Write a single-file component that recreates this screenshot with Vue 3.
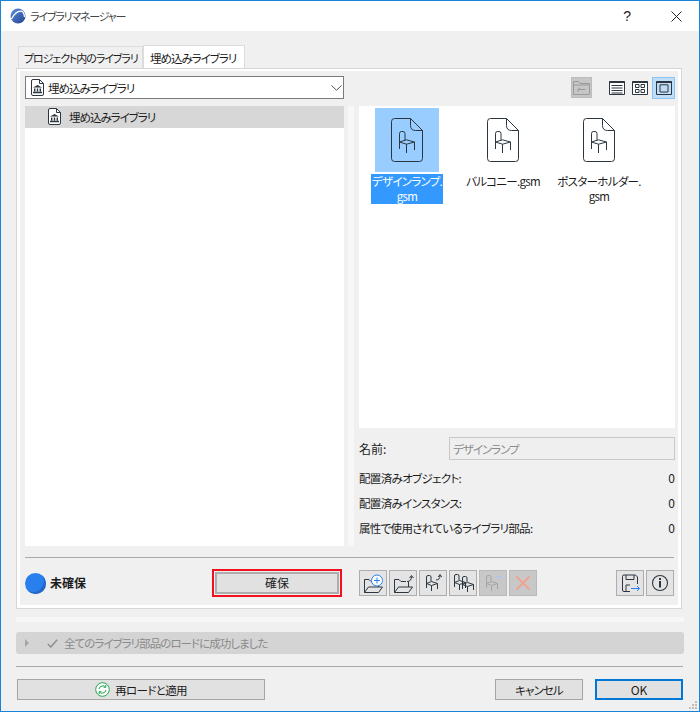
<script setup>
const files = [
  { top: 'デザインランプ.', bottom: 'gsm', selected: true },
  { top: 'バルコニー.gsm', bottom: '', selected: false },
  { top: 'ポスターホルダー.', bottom: 'gsm', selected: false },
]
const stats = [
  { label: '配置済みオブジェクト:', value: 0 },
  { label: '配置済みインスタンス:', value: 0 },
  { label: '属性で使用されているライブラリ部品:', value: 0 },
]
</script>

<template>
  <div class="window">
    <svg class="defs" width="0" height="0">
      <defs>
        <symbol id="chair" viewBox="0 0 16 22">
          <path d="M.5 18V2.5Q.5.5 2.5.5H4Q6 .5 6 2.5V9.5M.5 11L7.5 8.8 15.5 11 7.5 13.2ZM7.5 13.2V22M15.5 11V19" fill="none" stroke="currentColor" stroke-width="1" vector-effect="non-scaling-stroke" />
        </symbol>
        <symbol id="chair-s" viewBox="0 0 12 16">
          <path d="M.5 13V2Q.5.5 2 .5H3.5Q5 .5 5 2V6M.5 8.5L5.5 6.5 11.5 8.5 5.5 10.5ZM5.5 10.5V16M11.5 8.5V14" fill="none" stroke="currentColor" stroke-width="1" />
        </symbol>
        <symbol id="bank" viewBox="0 0 13 17">
          <path d="M.5 2Q.5.5 2 .5H8.5L12.5 4.5V15Q12.5 16.5 11 16.5H2Q.5 16.5.5 15Z" fill="#fff" stroke="#2b3640" stroke-width="1" />
          <path d="M8.5.5V4.5H12.5" fill="none" stroke="#2b3640" stroke-width="1" />
          <path d="M6.5 6L11 8.6H2ZM3 9.4H4.4V12.4H3ZM5.8 9.4H7.2V12.4H5.8ZM8.6 9.4H10V12.4H8.6ZM2 12.8H11V14.2H2Z" fill="#2b3640" />
        </symbol>
        <symbol id="folder" viewBox="0 0 28 26">
          <path d="M5.5 22.5V9.5H10L12 11.5H17M5.5 22.5H19.5L23.5 17H9.5ZM19.5 11.5V17" fill="none" stroke="currentColor" stroke-width="1" />
        </symbol>
      </defs>
    </svg>

    <header class="titlebar">
      <svg class="logo" width="16" height="16" viewBox="0 0 16 16">
        <defs>
          <linearGradient id="logoFill" x1="0" y1="0" x2="1" y2="1">
            <stop offset="0" stop-color="#5b93e0" />
            <stop offset="1" stop-color="#23418c" />
          </linearGradient>
        </defs>
        <circle cx="8" cy="8" r="7.5" fill="url(#logoFill)" />
        <path d="M1.5 11Q6 2.5 11.5 3.2Q14 4 14.5 9" fill="none" stroke="#fff" stroke-width="1.3" />
      </svg>
      <span class="title-text">ライブラリマネージャー</span>
      <span class="help">?</span>
      <svg class="close" width="11" height="11" viewBox="0 0 11 11">
        <path d="M.5.5L10.5 10.5M10.5.5L.5 10.5" stroke="#222" stroke-width="1" fill="none" />
      </svg>
    </header>

    <div class="tabs">
      <div class="tab">プロジェクト内のライブラリ</div>
      <div class="tab active">埋め込みライブラリ</div>
    </div>

    <section class="panel">
      <div class="panel-inner">
        <div class="panes">
          <div class="left">
            <div class="select">
              <svg class="lib" width="13" height="17"><use href="#bank" /></svg>
              <span class="select-text">埋め込みライブラリ</span>
              <svg class="chev" width="11" height="6" viewBox="0 0 11 6">
                <path d="M.5.5L5.5 5.2 10.5.5" fill="none" stroke="#555" stroke-width="1" />
              </svg>
            </div>
            <div class="tree">
              <div class="tree-row">
                <svg class="lib" width="13" height="17"><use href="#bank" /></svg>
                <span>埋め込みライブラリ</span>
              </div>
            </div>
          </div>

          <div class="splitter"></div>

          <div class="right">
            <div class="view-bar">
              <div class="up-btn">
                <svg width="17" height="15" viewBox="0 0 17 15">
                  <path d="M.5 14.5V1.5H5.5L7 3.5H16.5V14.5ZM.5 5H16.5M5 9.5H12.5M5 9.5L7 7.8M5 9.5V12" fill="none" stroke="#9a9a9a" stroke-width="1" />
                </svg>
              </div>
              <svg class="view-icon first" width="16" height="14" viewBox="0 0 16 14">
                <path d="M.5.5H15.5V13.5H.5Z" fill="#fff" stroke="#2b3640" />
                <path d="M.5 1H15.5" stroke="#2b3640" stroke-width="2" />
                <path d="M2.5 4.5H13.5M2.5 7H13.5M2.5 9.5H13.5M2.5 12H13.5" stroke="#2b3640" />
              </svg>
              <svg class="view-icon" width="16" height="14" viewBox="0 0 16 14">
                <path d="M.5.5H15.5V13.5H.5Z" fill="#fff" stroke="#2b3640" />
                <path d="M.5 1H15.5" stroke="#2b3640" stroke-width="2" />
                <path d="M3.5 3.5H7V6.5H3.5ZM9 3.5H12.5V6.5H9ZM3.5 8.5H7V11.5H3.5ZM9 8.5H12.5V11.5H9Z" fill="none" stroke="#2b3640" />
              </svg>
              <div class="view-active">
                <svg width="16" height="14" viewBox="0 0 16 14">
                  <path d="M.5.5H15.5V13.5H.5Z" fill="none" stroke="#2b3640" />
                  <path d="M.5 1H15.5" stroke="#2b3640" stroke-width="2" />
                  <path d="M4 3.8H12V11H4Z" fill="none" stroke="#2b3640" />
                </svg>
              </div>
            </div>

            <div class="files">
              <div v-for="f in files" :key="f.top" class="file" :class="{ selected: f.selected }">
                <div class="thumb">
                  <svg class="doc" width="32" height="44" viewBox="0 0 32 44">
                    <path d="M.5 3.5Q.5.5 3.5.5H19.5L31.5 12.5V40.5Q31.5 43.5 28.5 43.5H3.5Q.5 43.5.5 40.5Z" fill="none" stroke="#2b3640" stroke-width="1" />
                    <path d="M19.5.5V7.5Q19.5 12.5 24.5 12.5H31.5" fill="none" stroke="#2b3640" stroke-width="1" />
                    <use href="#chair" x="8" y="13" width="16" height="22" />
                  </svg>
                </div>
                <div class="file-label">
                  <span>{{ f.top }}</span>
                  <span v-if="f.bottom">{{ f.bottom }}</span>
                </div>
              </div>
            </div>

            <div class="name-row">
              <label class="name-label">名前:</label>
              <div class="name-input">デザインランプ</div>
            </div>
            <div class="stats">
              <div v-for="s in stats" :key="s.label" class="stat">
                <span class="stat-label">{{ s.label }}</span>
                <span>{{ s.value }}</span>
              </div>
            </div>
          </div>
        </div>

        <div class="divider"></div>

        <div class="actions">
          <div class="reserve-state">
            <span class="dot"></span>
            <b>未確保</b>
          </div>
          <div class="reserve-focus">
            <button class="btn reserve">確保</button>
          </div>

          <div class="tools">
            <div class="tool">
              <svg width="28" height="26"><use href="#folder" class="ink" /><circle cx="18" cy="10.5" r="5.5" fill="#fff" stroke="#2a7fef" /><path d="M15 10.5H21M18 7.5V13.5" stroke="#2a7fef" /></svg>
            </div>
            <div class="tool">
              <svg width="28" height="26"><use href="#folder" class="ink" /><path d="M18 11.5Q22.5 11.5 22.5 6.5M20.5 8L22.5 5.5 24.5 8" fill="none" stroke="#2b3640" /></svg>
            </div>
            <div class="tool">
              <svg width="28" height="26"><use href="#chair-s" x="7" y="5" width="12" height="16" class="ink" /><path d="M17 10Q21 10 21 5.5M19.3 7L21 4.5 22.7 7" fill="none" stroke="#2b3640" /></svg>
            </div>
            <div class="tool">
              <svg width="28" height="26"><use href="#chair-s" x="5" y="4" width="12" height="16" class="ink" /><use href="#chair-s" x="13" y="6" width="12" height="16" class="ink" /></svg>
            </div>
            <div class="tool off">
              <svg width="28" height="26"><use href="#chair-s" x="7" y="5" width="12" height="16" class="ink-off" /><path d="M17 7H23M20.5 4.8L23 7 20.5 9.2" fill="none" stroke="#a8c8f0" /></svg>
            </div>
            <div class="tool off">
              <svg width="28" height="26"><path d="M7.5 6.5L20.5 19.5M20.5 6.5L7.5 19.5" stroke="#eea394" stroke-width="2" /></svg>
            </div>
          </div>

          <div class="tools tools-end">
            <div class="tool">
              <svg width="28" height="26">
                <path d="M6.5 6.5Q6.5 5 8 5H19.5L21.5 7V14M6.5 6.5V20Q6.5 21.5 8 21.5H14M10 5V9.5H18V5M10 21.5V15H14" fill="none" stroke="#2b3640" />
                <path d="M15 18.5H23.5M21 16L23.5 18.5 21 21" fill="none" stroke="#2a7fef" />
              </svg>
            </div>
            <div class="tool">
              <svg width="28" height="26">
                <circle cx="14" cy="13" r="7.5" fill="none" stroke="#2b3640" stroke-width="1.1" />
                <rect x="13" y="8" width="2" height="2" fill="#2b3640" />
                <rect x="13" y="11" width="2" height="6.5" fill="#2b3640" />
              </svg>
            </div>
          </div>
        </div>
      </div>
    </section>

    <div class="strip"></div>

    <div class="status">
      <span class="arrow"></span>
      <svg class="check" width="11" height="9" viewBox="0 0 11 9">
        <path d="M.8 5L3.8 8 10.2.8" fill="none" stroke="#8f8f8f" stroke-width="1.5" />
      </svg>
      <span class="status-text">全てのライブラリ部品のロードに成功しました</span>
    </div>

    <div class="divider bottom-rule"></div>

    <footer class="footer">
      <button class="btn reload">
        <svg width="15" height="15" viewBox="0 0 15 15">
          <circle cx="7.5" cy="7.5" r="6.8" fill="#fff" stroke="#21a84d" />
          <path d="M4 7Q4.5 3.8 8 3.8Q9.6 3.8 10.6 5M10.8 3V5.3H8.6M11 8Q10.5 11.2 7 11.2Q5.4 11.2 4.4 10M4.2 12V9.7H6.4" fill="none" stroke="#21a84d" />
        </svg>
        <span class="reload-text">再ロードと適用</span>
      </button>
      <button class="btn cancel">キャンセル</button>
      <button class="btn ok">OK</button>
    </footer>

    <svg class="grip" width="8" height="8" viewBox="0 0 8 8">
      <path d="M6 0H8V2H6ZM3 3H5V5H3ZM6 3H8V5H6ZM0 6H2V8H0ZM3 6H5V8H3ZM6 6H8V8H6Z" fill="#bdbdbd" />
    </svg>
  </div>
</template>

<style scoped>
* { box-sizing: border-box; }
.window {
  position: relative;
  width: 700px;
  height: 712px;
  display: flex;
  flex-direction: column;
  border: 1px solid #1883d7;
  background: #f0f0f0;
  color: #1c1c1c;
  font: 12px/16px "Noto Sans CJK JP", "Noto Sans", sans-serif;
  font-feature-settings: "palt";
  overflow: hidden;
}
.defs { position: absolute; }
.titlebar {
  height: 30px;
  flex: none;
  background: #fff;
  display: flex;
  align-items: center;
  padding-left: 9px;
}
.title-text { margin-left: 4px; color: #444; font-size: 11px; letter-spacing: -1.2px; }
.help { margin-left: auto; font-size: 14px; color: #222; font-family: "Liberation Sans", sans-serif; }
.close { margin: 0 17px 0 40px; }

.tabs {
  display: flex;
  margin: 15px 0 0 17px;
  height: 22px;
  flex: none;
  position: relative;
  z-index: 1;
}
.tab {
  height: 22px;
  padding: 3px 0 0 5px;
  width: 125px;
  background: #f0f0f0;
  border: 1px solid #dcdcdc;
  border-bottom: 0;
  white-space: nowrap;
  overflow: hidden;
  font-size: 11px;
  letter-spacing: -1.1px;
}
.tab.active {
  width: 102px;
  background: #fff;
  padding-left: 6px;
  height: 23px;
  margin-top: -1px;
  padding-top: 4px;
  font-size: 11.5px;
  letter-spacing: -1px;
}

.panel {
  width: 666px;
  height: 541px;
  margin-left: 15px;
  flex: none;
  border: 1px solid #d6d6d6;
  background: #f0f0f0;
}
.panel-inner {
  height: 100%;
  border: solid #fff;
  border-width: 2px 3px 3px 3px;
  padding: 5px 4px 0 5px;
  display: flex;
  flex-direction: column;
}
.panes {
  display: flex;
  height: 470px;
  flex: none;
}
.left {
  width: 319px;
  flex: none;
  display: flex;
  flex-direction: column;
}
.select {
  height: 23px;
  border: 1px solid #7a7a7a;
  background: #fff;
  display: flex;
  align-items: center;
  padding-left: 5px;
  flex: none;
}
.select-text { margin-left: 4px; font-size: 11.5px; letter-spacing: -1px; }
.chev { margin-left: auto; margin-right: 1px; }
.tree {
  margin-top: 7px;
  flex: 1;
  background: #fff;
}
.tree-row {
  height: 22px;
  background: #d7d7d7;
  display: flex;
  align-items: center;
  padding: 0 0 1px 23px;
}
.tree-row span { margin-left: 8px; font-size: 11.5px; letter-spacing: -1px; }
.splitter {
  width: 6px;
  margin: 30px 0 0 4px;
  background: #f7f7f7;
  flex: none;
}
.right {
  margin-left: 5px;
  width: 316px;
  flex: none;
  display: flex;
  flex-direction: column;
}
.view-bar {
  height: 23px;
  display: flex;
  align-items: center;
  flex: none;
}
.up-btn {
  width: 21px;
  height: 21px;
  margin-left: 212px;
  background: #c6c6c6;
  border: 1px solid #bcbcbc;
  display: flex;
  align-items: center;
  justify-content: center;
}
.view-icon { flex: none; margin-left: 7px; }
.view-icon.first { margin-left: 17px; }
.view-active {
  width: 23px;
  height: 22px;
  margin-left: 4px;
  background: #bfddf6;
  border: 1px solid #8cc4f5;
  display: flex;
  align-items: center;
  justify-content: center;
}
.files {
  margin-top: 7px;
  height: 322px;
  flex: none;
  background: #fff;
  display: grid;
  grid-template-columns: repeat(3, 96px);
  align-content: start;
  padding-top: 2px;
}
.file { display: flex; flex-direction: column; align-items: center; }
.thumb {
  width: 64px;
  height: 64px;
  display: flex;
  align-items: center;
  justify-content: center;
}
.doc { color: #2b3640; }
.file.selected .thumb { background: #99ccff; }
.file-label {
  width: 72px;
  margin-top: 2px;
  display: flex;
  flex-direction: column;
  align-items: center;
  white-space: nowrap;
  line-height: 15px;
  font-size: 11.5px;
  letter-spacing: -.7px;
}
.file.selected .file-label { background: #3399ff; color: #fff; }
.name-row {
  margin-top: 9px;
  display: flex;
  align-items: center;
  height: 23px;
  flex: none;
}
.name-label { width: 90px; }
.name-input {
  width: 226px;
  height: 23px;
  border: 1px solid #c8c8c8;
  background: #efefef;
  color: #8a8a8a;
  padding: 3px 0 0 3px;
  font-size: 11.5px;
  letter-spacing: -1px;
}
.stats {
  margin-top: 10px;
  display: flex;
  flex-direction: column;
  gap: 9px;
}
.stat { display: flex; justify-content: space-between; height: 16px; }
.stat-label { font-size: 11.5px; letter-spacing: -.67px; }

.divider {
  height: 1px;
  flex: none;
  background: #a8a8a8;
}
.panel-inner > .divider { margin-top: 11px; }
.actions {
  display: flex;
  align-items: center;
  margin-top: 11px;
  height: 28px;
}
.reserve-state {
  width: 187px;
  display: flex;
  align-items: center;
  flex: none;
}
.dot {
  width: 21px;
  height: 21px;
  border-radius: 50%;
  background: #2a7fef;
  box-shadow: inset -3px -3px 0 -1px #2467c4;
  flex: none;
}
.reserve-state b { margin-left: 4px; font-weight: 700; }
.reserve-focus {
  width: 130px;
  height: 28px;
  flex: none;
  border: 2px solid #f01020;
  padding: 1px;
}
.btn {
  font: inherit;
  font-feature-settings: "palt";
  color: #1c1c1c;
  background: #e1e1e1;
  border: 1px solid #adadad;
  padding: 0;
  display: flex;
  align-items: center;
  justify-content: center;
}
.reserve { width: 100%; height: 100%; border-width: 2px; }
.tools { display: flex; gap: 2px; margin-left: 17px; }
.tools-end { margin-left: auto; }
.tool {
  width: 28px;
  height: 26px;
  background: #e4e4e4;
  border: 1px solid #adadad;
  color: #2b3640;
}
.tool svg { display: block; margin: -1px; }
.tool.off { background: #c8c8c8; border-color: #b9b9b9; }
.ink { color: #2b3640; }
.ink-off { color: #a4a4a4; }

.strip {
  width: 668px;
  height: 5px;
  margin: 8px 0 0 15px;
  flex: none;
  background: #f7f7f7;
}
.status {
  width: 668px;
  height: 22px;
  margin: 10px 0 0 15px;
  flex: none;
  background: #d4d4d4;
  border-radius: 3px;
  color: #8a8a8a;
  display: flex;
  align-items: center;
  padding-left: 9px;
}
.status-text { font-size: 11.5px; letter-spacing: -.95px; }
.arrow {
  width: 0;
  height: 0;
  border: solid transparent;
  border-width: 4px 0 4px 4px;
  border-left-color: #a5a5a5;
  flex: none;
}
.check { margin-left: 18px; margin-right: 6px; flex: none; }
.bottom-rule { width: 667px; margin: 12px 0 0 15px; }
.footer {
  display: flex;
  margin: 12px 0 0 16px;
  height: 21px;
}
.footer .btn { border-color: #a5a5a5; height: 21px; }
.reload { width: 248px; gap: 5px; }
.reload-text { font-size: 11.5px; letter-spacing: -.67px; }
.cancel { width: 88px; margin-left: 230px; font-size: 11.5px; letter-spacing: -.9px; }
.ok { width: 88px; margin-left: 12px; border: 2px solid #0078d7 !important; }
.grip { position: absolute; right: 2px; bottom: 2px; }
</style>

<style>
html, body { margin: 0; padding: 0; background: #f0f0f0; }
</style>
